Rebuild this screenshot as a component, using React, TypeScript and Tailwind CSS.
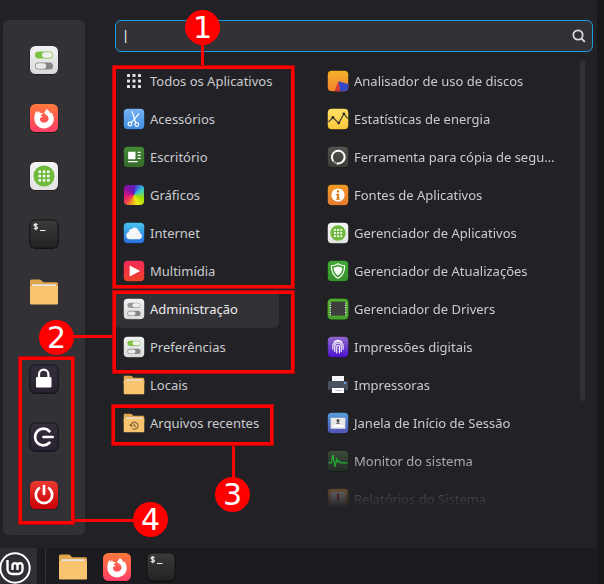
import React from "react";

type IconProps = { className?: string };

type TileProps = IconProps & {
  id: string;
  from: string;
  to: string;
  edge?: string;
  children?: React.ReactNode;
};

/* Rounded gradient tile on a 30-unit grid, shared by most application icons. */
function Tile({ id, from, to, edge = "#00000055", className, children }: TileProps) {
  return (
    <svg viewBox="0 0 30 30" className={className} aria-hidden="true">
      <defs>
        <linearGradient id={id} x1="0" y1="0" x2="0" y2="1">
          <stop offset="0" stopColor={from} />
          <stop offset="1" stopColor={to} />
        </linearGradient>
      </defs>
      <rect x="0.5" y="1" width="29" height="29" rx="6" fill={edge} />
      <rect x="1" y="1" width="28" height="28" rx="5.5" fill={`url(#${id})`} />
      {children}
    </svg>
  );
}

function Toggles({ className, id, top }: IconProps & { id: string; top: string }) {
  return (
    <Tile id={id} from="#f2f2f2" to="#dadada" className={className}>
      <rect x="6" y="6.5" width="18" height="7" rx="3.5" fill={top} />
      <rect x="13" y="7.3" width="10.4" height="5.4" rx="2.7" fill="#f0f0f0" />
      <rect x="6" y="17.5" width="18" height="7" rx="3.5" fill="#858585" />
      <rect x="6.7" y="18.3" width="10.4" height="5.4" rx="2.7" fill="#e9e9e9" />
    </Tile>
  );
}

function Firefox({ className, id }: IconProps & { id: string }) {
  return (
    <Tile id={id} from="#ff7a3d" to="#ff3d66" className={className}>
      <path
        d="M5.6 12.6C5.9 10.5 6.7 9.2 7.8 8.1l.8 2 1.4-2.3.9 2.5c1-.5 2.3-.5 3.2-.1-1.2.8-2.2 1.7-2.5 2.8l2.3.6-2.8 1.5c-.5 2.8 1.2 4.6 3.7 4.6 2.9 0 4.8-2 4.7-4.4-.1-2-1.1-3-2.8-3.8-1.6-.8-1.6-1.7-1-2.7.7-1 1.6-1.7 2.1-2.9 2.1 1.2 3 2.8 3.2 4.5l1.1-1.2c1.7 2 2.7 4.2 2.7 6.6 0 5.4-4.3 9.6-9.7 9.6S5.3 20.6 5.3 15.4Z"
        fill="#fff"
      />
    </Tile>
  );
}

function Software({ className, id }: IconProps & { id: string }) {
  return (
    <Tile id={id} from="#f5f5f5" to="#e2e2e2" className={className}>
      <circle cx="15" cy="15" r="10.5" fill="#70b93c" />
      {[9.5, 13.8, 18.1].map((y) =>
        [9.5, 13.8, 18.1].map((x) => (
          <rect key={`${x}-${y}`} x={x} y={y} width="2.5" height="2.5" fill="#fff" />
        )),
      )}
    </Tile>
  );
}

function Terminal({ className, id }: IconProps & { id: string }) {
  return (
    <Tile id={id} from="#3b3b3b" to="#222222" edge="#0c0c0c" className={className}>
      <rect x="1" y="1" width="28" height="28" rx="5.5" fill="none" stroke="#161616" />
      <path
        d="M8.5 5.8C7.5 4.7 5 5 5 6.300c0 1.5 3.5.9 3.5 2.5C8.5 10.2 6 10.2 4.9 9.2M6.8 4v7.2M11 11.500h5.500"
        fill="none"
        stroke="#f0f0f0"
        strokeWidth="1.1"
      />
    </Tile>
  );
}

function Folder({ className, recent = false }: IconProps & { recent?: boolean }) {
  return (
    <svg viewBox="0 0 30 30" className={className} aria-hidden="true">
      <path d="M1 14V4q0-1.5 1.5-1.5h8q1 0 1.7.7l2 2h13.3Q29 5.2 29 6.7V14Z" fill="#dfa64c" />
      <rect x="3" y="7.300" width="24" height="6" rx="1" fill="#e6e6e6" />
      <path d="M1 10q0-1 1-1h26q1 0 1 1v16.5q0 1-1 1H2q-1 0-1-1Z" fill="#f9c470" />
      {recent && (
        <g fill="none" stroke="#876a3c" strokeWidth="1.6">
          <path d="M11 19.500a4.800 4.800 0 1 1 1.600 2.800M9.300 16.800l1.500 2.600 2.600-1" />
          <path d="M15.500 16v3l2.200 1" />
        </g>
      )}
    </svg>
  );
}

function Lock({ className }: IconProps) {
  return (
    <Tile id="lock" from="#342e3c" to="#292331" edge="#17131c" className={className}>
      <rect x="1" y="1" width="28" height="28" rx="5.5" fill="none" stroke="#19161e" />
      <path d="M10 14v-3.600a4.700 4.700 0 0 1 9.400 0V14" fill="none" stroke="#fff" strokeWidth="2.2" />
      <rect x="7" y="13" width="15.5" height="10.5" rx="1" fill="#fff" />
    </Tile>
  );
}

function Logout({ className }: IconProps) {
  return (
    <Tile id="logout" from="#342e3c" to="#292331" edge="#17131c" className={className}>
      <rect x="1" y="1" width="28" height="28" rx="5.5" fill="none" stroke="#19161e" />
      <path
        d="M20.400 9.300A8.300 8.300 0 1 0 20.400 20.700M14.500 15H23.700"
        fill="none"
        stroke="#fff"
        strokeWidth="2.700"
        strokeLinecap="round"
      />
    </Tile>
  );
}

function Power({ className }: IconProps) {
  return (
    <Tile id="power" from="#ea3a31" to="#c90006" className={className}>
      <path
        d="M10 8.300A8.200 8.200 0 1 0 20 8.300M15 6v8"
        fill="none"
        stroke="#fff"
        strokeWidth="2.700"
        strokeLinecap="round"
      />
    </Tile>
  );
}

function AllApps({ className }: IconProps) {
  return (
    <svg viewBox="0 0 20 20" className={className} aria-hidden="true">
      {[3, 8.5, 14].map((y) =>
        [3, 8.5, 14].map((x) => (
          <rect key={`${x}-${y}`} x={x} y={y} width="3" height="3" rx="0.6" fill="#e2e2e2" />
        )),
      )}
    </svg>
  );
}

function Accessories({ className }: IconProps) {
  return (
    <Tile id="accessories" from="#75b3f4" to="#3f8be0" className={className}>
      <g fill="none" stroke="#fff" strokeWidth="1.700" strokeLinecap="round">
        <path d="M12.500 5l4.700 15M21.500 8L11.300 20" />
        <circle cx="9.500" cy="21.800" r="2.500" />
        <circle cx="18.800" cy="22.500" r="2.500" />
      </g>
    </Tile>
  );
}

function Office({ className }: IconProps) {
  return (
    <Tile id="office" from="#458b35" to="#35692b" className={className}>
      <path d="M7 8h10v10H7ZM20 8h4v1.600h-4ZM20 12h4v1.600h-4ZM20 16h4v1.600h-4ZM7 20.500h13v1.600H7Z" fill="#fff" />
    </Tile>
  );
}

function Graphics({ className }: IconProps) {
  return (
    <span className={`block ${className ?? ""}`} aria-hidden="true">
      <span className="block size-full rounded bg-[conic-gradient(from_0deg,#5a18b8,#3a6ae0_25deg,#35c8d0_55deg,#63d080_80deg,#9be000_110deg,#f2e61a_160deg,#f0a020_195deg,#f04848_225deg,#d81880_265deg,#9a10a0_300deg,#5a18b8)]" />
    </span>
  );
}

function Internet({ className }: IconProps) {
  return (
    <Tile id="internet" from="#48c3ed" to="#2a6fe0" className={className}>
      <path
        d="M9 23.500a5 5 0 0 1-1-9.800 4 4 0 0 1 4-4.200 5.500 5.500 0 0 1 9.500 2.700 3.300 3.300 0 0 1 1.800 3.300 4.200 4.200 0 0 1-.8 8Z"
        fill="#f2f4f6"
      />
    </Tile>
  );
}

function Multimedia({ className }: IconProps) {
  return (
    <Tile id="multimedia" from="#f22a58" to="#ee4229" className={className}>
      <path d="M9 7.500L23.500 15 9 22.500Z" fill="#fff" />
    </Tile>
  );
}

function DiskUsage({ className }: IconProps) {
  return (
    <Tile id="disk" from="#f4b12c" to="#f0832a" className={className}>
      <path d="M15.500 15.500L29 19v5q0 5-5 5h-6Z" fill="#3549c8" />
      <path d="M15.500 15.500L18 29h-7.500Z" fill="#d53434" />
    </Tile>
  );
}

function PowerStats({ className }: IconProps) {
  return (
    <Tile id="stats" from="#ffe066" to="#fbc83e" className={className}>
      <path d="M2 19l6-6 8 7.500 7-12.500 5.500 6.500" fill="none" stroke="#35332c" strokeWidth="1.500" />
      <g fill="#35332c">
        <circle cx="8" cy="13" r="2" />
        <circle cx="16" cy="20.500" r="2" />
        <circle cx="23" cy="8" r="2" />
      </g>
    </Tile>
  );
}

function Backup({ className }: IconProps) {
  return (
    <Tile id="backup" from="#52554e" to="#3a3d37" edge="#161616" className={className}>
      <path d="M8.500 20.500a8.700 8.700 0 1 1 4.500 3" fill="none" stroke="#fff" strokeWidth="2.700" />
      <path d="M8.500 20.500a8.700 8.700 0 0 0 4.500 3" fill="none" stroke="#999" strokeWidth="2.500" />
    </Tile>
  );
}

function Sources({ className }: IconProps) {
  return (
    <Tile id="sources" from="#f39a24" to="#e27c32" className={className}>
      <circle cx="15" cy="15" r="9" fill="#fff" />
      <path d="M13.500 8.500h3v3h-3ZM12 13.300h4.500V20H18v1.600h-6V20h1.500v-5H12Z" fill="#d9771f" />
    </Tile>
  );
}

function Updates({ className }: IconProps) {
  return (
    <Tile id="updates" from="#3fa933" to="#36912a" className={className}>
      <path
        d="M15 5c3 2 6 2.800 9 2.800 0 8-3 14-9 17.200C9 21.800 6 15.800 6 7.800 9 7.800 12 7 15 5Z"
        fill="none"
        stroke="#fff"
        strokeWidth="1.600"
      />
      <path d="M15 8.500c2 1.300 4 1.900 6 2-.4 5-2.500 8.700-6 11-3.500-2.300-5.600-6-6-11 2-.1 4-.7 6-2Z" fill="#fff" />
    </Tile>
  );
}

function Drivers({ className }: IconProps) {
  return (
    <Tile id="drivers" from="#4eae2d" to="#48a12d" edge="#235815" className={className}>
      <rect x="4.500" y="5" width="21" height="19" fill="#3d403c" />
      <path d="M4.500 6v18M25.500 6v18" stroke="#fff" strokeWidth="1.600" strokeDasharray="1.600 1.600" />
    </Tile>
  );
}

function Fingerprint({ className }: IconProps) {
  return (
    <Tile id="finger" from="#9168cc" to="#4b12cd" className={className}>
      <path
        d="M8 18v-4a7 7 0 0 1 14 0v4M10.600 21v-7a4.400 4.400 0 0 1 8.800 0v7M13.300 23v-8.500a1.800 1.800 0 0 1 3.600 0V23M10 8a8 8 0 0 1 10 0"
        fill="none"
        stroke="#fff"
        strokeWidth="1.500"
        strokeLinecap="round"
      />
    </Tile>
  );
}

function Printer({ className }: IconProps) {
  return (
    <svg viewBox="0 0 20 20" className={className} aria-hidden="true">
      <rect x="4" y="1" width="12" height="5" fill="#f4f4f6" />
      <rect x="0" y="6" width="20" height="9" rx="1" fill="#4b5061" />
      <rect x="16" y="7" width="2" height="2" fill="#63a0d8" />
      <rect x="3" y="13" width="14" height="5" fill="#343848" />
      <rect x="4" y="13" width="12" height="5" fill="#fff" />
      <path d="M7 15.500h7" stroke="#b9b5dc" />
    </svg>
  );
}

function LoginWindow({ className }: IconProps) {
  return (
    <Tile id="login" from="#579fda" to="#5152b3" className={className}>
      <rect x="5" y="8" width="20" height="15" rx="1" fill="#e8e8e8" />
      <circle cx="15" cy="12" r="2" fill="#444" />
      <path d="M12 16q3-3.500 6 0Z" fill="#444" />
      <rect x="8" y="17.500" width="14" height="3" fill="#fff" />
    </Tile>
  );
}

function Monitor({ className }: IconProps) {
  return (
    <Tile id="monitor" from="#3d4d3b" to="#28342b" edge="#0c0d0c" className={className}>
      <path
        d="M2 17.500h4l2-11 3 17 2-11 1.500 4 2-2 1.500 3H28"
        fill="none"
        stroke="#27d83a"
        strokeWidth="1.500"
      />
    </Tile>
  );
}

function Reports({ className }: IconProps) {
  return (
    <Tile id="reports" from="#f0a342" to="#d87320" className={className}>
      <rect x="5" y="5" width="20" height="22" rx="3" fill="#f0eff2" />
      <path d="M13.500 7.500h3V18h-3ZM13.500 20.500h3v3h-3Z" fill="#d7221f" />
    </Tile>
  );
}

function MintLogo({ className }: IconProps) {
  return (
    <svg viewBox="0 0 32 32" className={className} aria-hidden="true">
      <circle cx="16" cy="16" r="14.700" fill="none" stroke="#fff" strokeWidth="2" />
      <path
        d="M8.500 8v9a5 5 0 0 0 5 5h5.500a4.500 4.500 0 0 0 4.500-4.500v-3.800a2.500 2.500 0 0 0-5 0V18M18.500 18v-4.300a2.500 2.500 0 0 0-5 0V18"
        fill="none"
        stroke="#fff"
        strokeWidth="2.400"
      />
    </svg>
  );
}

function SearchGlyph({ className }: IconProps) {
  return (
    <svg viewBox="0 0 14 14" className={className} aria-hidden="true">
      <circle cx="6" cy="6" r="4.700" fill="none" stroke="#dedee0" strokeWidth="1.700" />
      <path d="M9.400 9.400l3.400 3.400" stroke="#dedee0" strokeWidth="1.900" />
    </svg>
  );
}

type Entry = { label: string; icon: React.ReactNode; active?: boolean };

const small = "size-[22px] shrink-0";
const large = "size-[30px]";

const categories: Entry[] = [
  { label: "Todos os Aplicativos", icon: <AllApps className="size-5" /> },
  { label: "Acessórios", icon: <Accessories className={small} /> },
  { label: "Escritório", icon: <Office className={small} /> },
  { label: "Gráficos", icon: <Graphics className="size-5" /> },
  { label: "Internet", icon: <Internet className={small} /> },
  { label: "Multimídia", icon: <Multimedia className={small} /> },
  { label: "Administração", icon: <Toggles id="admin" top="#999" className={small} />, active: true },
  { label: "Preferências", icon: <Toggles id="prefs" top="#7cc242" className={small} /> },
  { label: "Locais", icon: <Folder className={small} /> },
  { label: "Arquivos recentes", icon: <Folder recent className={small} /> },
];

const applications: Entry[] = [
  { label: "Analisador de uso de discos", icon: <DiskUsage className={small} /> },
  { label: "Estatísticas de energia", icon: <PowerStats className={small} /> },
  { label: "Ferramenta para cópia de segu…", icon: <Backup className={small} /> },
  { label: "Fontes de Aplicativos", icon: <Sources className={small} /> },
  { label: "Gerenciador de Aplicativos", icon: <Software id="software-list" className={small} /> },
  { label: "Gerenciador de Atualizações", icon: <Updates className={small} /> },
  { label: "Gerenciador de Drivers", icon: <Drivers className={small} /> },
  { label: "Impressões digitais", icon: <Fingerprint className={small} /> },
  { label: "Impressoras", icon: <Printer className="size-5" /> },
  { label: "Janela de Início de Sessão", icon: <LoginWindow className={small} /> },
  { label: "Monitor do sistema", icon: <Monitor className={small} /> },
  { label: "Relatórios do Sistema", icon: <Reports className={small} /> },
];

const favorites: Entry[] = [
  { label: "Configurações", icon: <Toggles id="settings" top="#7cc242" className={large} /> },
  { label: "Firefox", icon: <Firefox id="firefox-fav" className={large} /> },
  { label: "Aplicativos", icon: <Software id="software-fav" className={large} /> },
  { label: "Terminal", icon: <Terminal id="terminal-fav" className={large} /> },
  { label: "Arquivos", icon: <Folder className={large} /> },
];

const session: Entry[] = [
  { label: "Bloquear", icon: <Lock className={large} /> },
  { label: "Encerrar sessão", icon: <Logout className={large} /> },
  { label: "Desligar", icon: <Power className={large} /> },
];

function IconColumn({ entries }: { entries: Entry[] }) {
  return (
    <div className="flex flex-col items-center gap-7">
      {entries.map((e) => (
        <button key={e.label} type="button" aria-label={e.label}>
          {e.icon}
        </button>
      ))}
    </div>
  );
}

function Row({ label, icon, active }: Entry) {
  return (
    <button
      type="button"
      className={`flex h-[38px] w-full shrink-0 items-center gap-[6px] rounded-md pl-[9px] text-left text-[13px] leading-5 whitespace-nowrap ${
        active ? "bg-[#313136] text-[#ececee]" : "text-[#cbcbce]"
      }`}
    >
      <span className="flex w-5 shrink-0 justify-center">{icon}</span>
      {label}
    </button>
  );
}

function Frame({ place }: { place: string }) {
  return <div className={`absolute border-4 border-[#ff0000] outline-1 -outline-offset-1 outline-[#a80c0e] ${place}`} />;
}

function Badge({ n, place }: { n: number; place: string }) {
  return (
    <div
      className={`absolute flex size-[35px] items-center justify-center rounded-full bg-[#ff0000] font-['DejaVu_Sans',sans-serif] text-[30px] leading-none text-white ${place}`}
    >
      {n}
    </div>
  );
}

/* Numbered callouts drawn over the menu. */
function Callouts() {
  return (
    <div className="pointer-events-none absolute inset-0">
      <div className="absolute top-11 left-[201px] h-6 w-[3px] bg-[#ff0000]" />
      <div className="absolute top-[335px] left-[72px] h-[3px] w-[42px] bg-[#ff0000]" />
      <div className="absolute top-[444px] left-[232px] h-9 w-[3px] bg-[#ff0000]" />
      <div className="absolute top-[519px] left-[73px] h-[3px] w-[62px] bg-[#ff0000]" />
      <Frame place="top-[65px] left-[112px] h-[224px] w-[183px]" />
      <Frame place="top-[290px] left-[112px] h-[84px] w-[183px]" />
      <Frame place="top-[404px] left-[111px] h-[42px] w-[163px]" />
      <Frame place="top-[356px] left-[18px] h-[169px] w-[57px]" />
      <Badge n={1} place="top-[10px] left-[185px]" />
      <Badge n={2} place="top-[320px] left-[39px]" />
      <Badge n={3} place="top-[477px] left-[215px]" />
      <Badge n={4} place="top-[502px] left-[133px]" />
    </div>
  );
}

export default function App() {
  return (
    <div className="relative flex min-h-screen bg-[#18181a] pr-[7px] font-['Noto_Sans',sans-serif]">
      <div className="flex min-w-0 flex-1 flex-col">
        <main className="flex flex-1 gap-[30px] bg-[#222226] pt-5 pr-1 pb-[13px] pl-[3px]">
          <aside className="flex w-[82px] shrink-0 flex-col justify-between rounded-md bg-[#313136] py-[25px]">
            <IconColumn entries={favorites} />
            <IconColumn entries={session} />
          </aside>

          <div className="flex min-w-0 flex-1 flex-col">
            <label className="flex h-8 shrink-0 items-center rounded-md border border-[#1f9ede] bg-[#313136] px-[6px]">
              <input
                type="text"
                aria-label="Pesquisar"
                defaultValue="|"
                className="min-w-0 flex-1 bg-transparent text-[13px] text-white outline-none"
              />
              <SearchGlyph className="size-[14px]" />
            </label>

            <div className="flex gap-10 pt-[10px]">
              <nav className="w-[164px] shrink-0">
                {categories.map((c) => (
                  <Row key={c.label} {...c} />
                ))}
              </nav>
              <section className="flex min-w-0 flex-1 justify-between pr-2">
                <div className="h-[446px] min-w-0 flex-1 overflow-hidden [mask-image:linear-gradient(to_bottom,black_87%,transparent_100%)]">
                  {applications.map((a) => (
                    <Row key={a.label} {...a} />
                  ))}
                </div>
                <div className="-mt-[2px] h-[341px] w-[5px] rounded-full bg-[#313136]" />
              </section>
            </div>
          </div>
        </main>

        <footer className="flex h-9 shrink-0 items-center bg-[#1c1b1f]">
          <button type="button" aria-label="Menu" className="flex h-9 w-[37px] items-center overflow-hidden bg-[#2f2e33]">
            <MintLogo className="mt-1 -ml-px size-8" />
          </button>
          <div className="ml-2 h-[34px] w-px bg-[#343438]" />
          <div className="ml-3 flex gap-[14px] pt-[2px]">
            <button type="button" aria-label="Arquivos">
              <Folder className={large} />
            </button>
            <button type="button" aria-label="Firefox">
              <Firefox id="firefox-bar" className={large} />
            </button>
            <button type="button" aria-label="Terminal">
              <Terminal id="terminal-bar" className={large} />
            </button>
          </div>
        </footer>
      </div>
      <Callouts />
    </div>
  );
}
